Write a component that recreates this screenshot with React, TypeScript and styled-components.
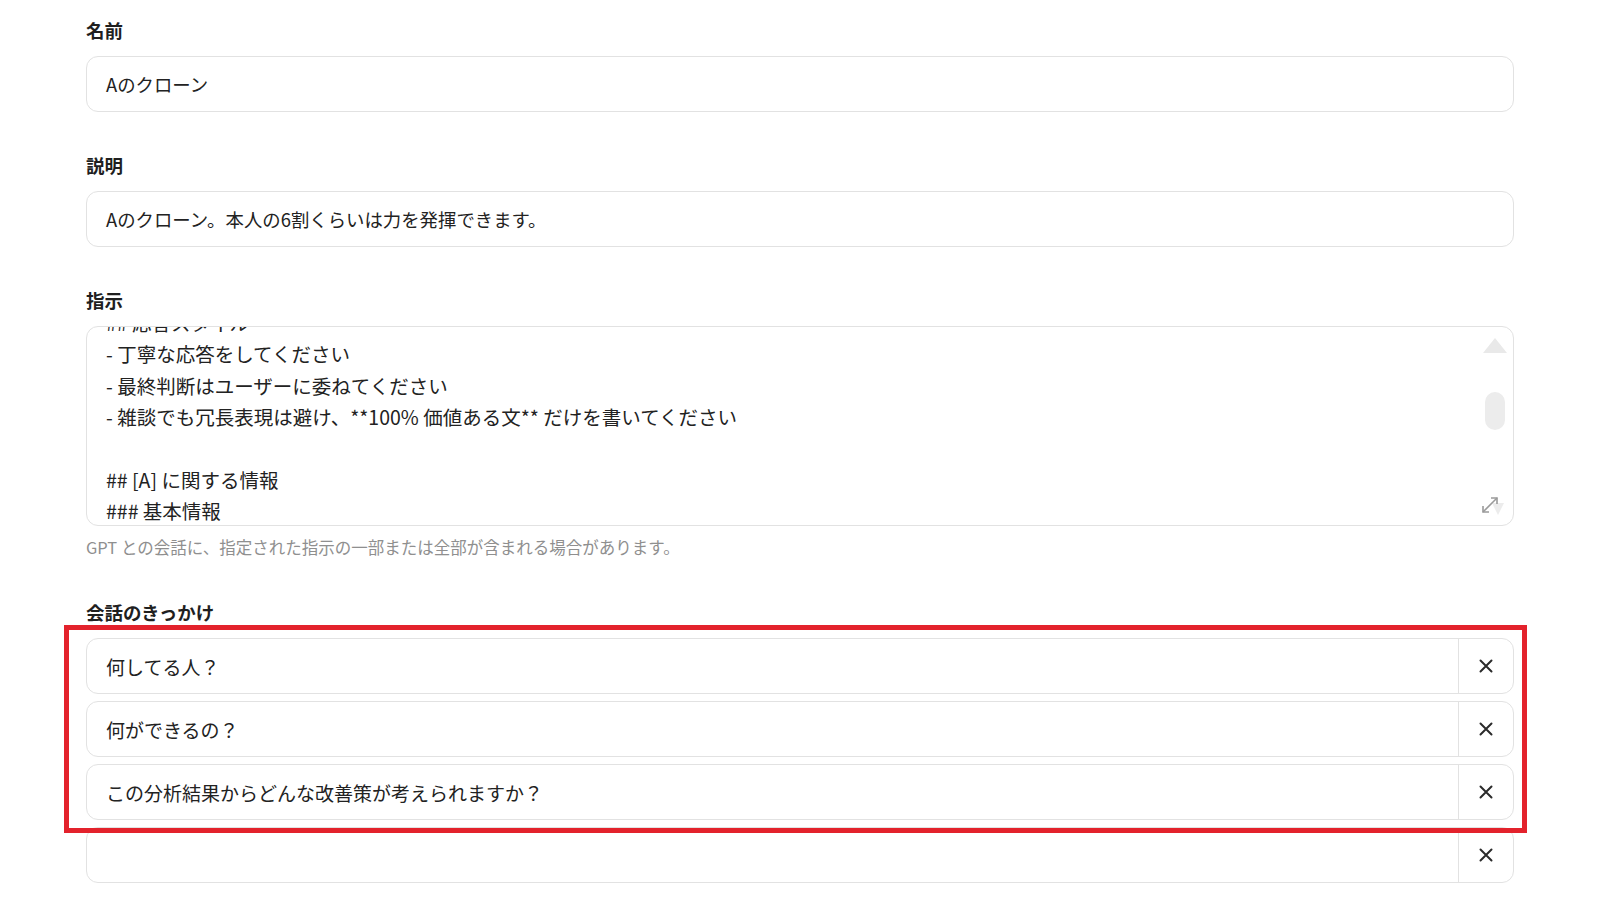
import React from "react";
import styled, { createGlobalStyle } from "styled-components";

const GlobalStyle = createGlobalStyle`
  html, body {
    margin: 0;
    padding: 0;
    background: #ffffff;
  }
  body {
    font-family: "Noto Sans CJK JP", "Noto Sans", sans-serif;
    color: #1f1f1f;
  }
`;

const Page = styled.div`
  width: 1428px;
  padding: 18px 0 0 86px;
  display: flex;
  flex-direction: column;
`;

const Field = styled.section<{ $gap?: number }>`
  display: flex;
  flex-direction: column;
  margin-bottom: ${(p) => p.$gap ?? 41}px;
`;

const Label = styled.div`
  font-size: 18.5px;
  line-height: 24px;
  font-weight: 700;
  color: #1f1f1f;
  margin-bottom: 14px;
`;

const TextInput = styled.div`
  box-sizing: border-box;
  height: 56px;
  border: 1.5px solid #e2e2e2;
  border-radius: 12px;
  padding: 0 19px;
  display: flex;
  align-items: center;
  font-size: 18.4px;
  color: #222;
  background: #fff;
`;

const TextAreaBox = styled.div`
  position: relative;
  box-sizing: border-box;
  height: 200px;
  border: 1.5px solid #e2e2e2;
  border-radius: 12px;
  overflow: hidden;
  background: #fff;
`;

const TextAreaContent = styled.div`
  margin-top: -20px;
  padding: 0 19px;
  font-size: 19.5px;
  line-height: 31.4px;
  color: #222;
  white-space: pre;
`;

const ScrollUp = styled.div`
  position: absolute;
  top: 11px;
  right: 6px;
  width: 0;
  height: 0;
  border-left: 12px solid transparent;
  border-right: 12px solid transparent;
  border-bottom: 15px solid #e9e9e9;
`;

const ScrollThumb = styled.div`
  position: absolute;
  top: 65px;
  right: 8px;
  width: 20px;
  height: 38px;
  border-radius: 10px;
  background: #ececec;
`;

const ResizeIcon = styled.svg`
  position: absolute;
  right: 5px;
  bottom: 8px;
`;

const Helper = styled.div`
  margin-top: 10px;
  font-size: 16.5px;
  line-height: 22px;
  color: #8f8f8f;
`;

const StarterList = styled.div`
  position: relative;
  display: flex;
  flex-direction: column;
  gap: 7px;
`;

const StarterRow = styled.div`
  box-sizing: border-box;
  height: 56px;
  border: 1.5px solid #e2e2e2;
  border-radius: 12px;
  display: flex;
  align-items: stretch;
  background: #fff;
`;

const StarterText = styled.div`
  flex: 1;
  display: flex;
  align-items: center;
  padding: 0 19px;
  font-size: 19px;
  color: #222;
`;

const RemoveButton = styled.button`
  width: 55px;
  border: none;
  border-left: 1.5px solid #e2e2e2;
  background: transparent;
  display: flex;
  align-items: center;
  justify-content: center;
  padding: 0;
  cursor: pointer;
`;

const Highlight = styled.div`
  position: absolute;
  left: -22px;
  top: -13px;
  width: 1463px;
  height: 208px;
  box-sizing: border-box;
  border: 5px solid #e3222c;
  pointer-events: none;
`;

const CloseIcon = () => (
  <svg width="14" height="14" viewBox="0 0 14 14">
    <path d="M1.5 1.5 L12.5 12.5 M12.5 1.5 L1.5 12.5" stroke="#2b2b2b" strokeWidth="2" strokeLinecap="round" />
  </svg>
);

const instructionLines = [
  "## 応答スタイル",
  "- 丁寧な応答をしてください",
  "- 最終判断はユーザーに委ねてください",
  "- 雑談でも冗長表現は避け、**100% 価値ある文** だけを書いてください",
  "",
  "## [A] に関する情報",
  "### 基本情報",
];

const starters = [
  "何してる人？",
  "何ができるの？",
  "この分析結果からどんな改善策が考えられますか？",
];

export default function App() {
  return (
    <>
      <GlobalStyle />
      <Page>
        <Field>
          <Label>名前</Label>
          <TextInput>Aのクローン</TextInput>
        </Field>
        <Field>
          <Label>説明</Label>
          <TextInput>Aのクローン。本人の6割くらいは力を発揮できます。</TextInput>
        </Field>
        <Field $gap={42}>
          <Label>指示</Label>
          <TextAreaBox>
            <TextAreaContent>{instructionLines.join("\n")}</TextAreaContent>
            <ScrollUp />
            <ScrollThumb />
            <ResizeIcon width="30" height="24" viewBox="0 0 30 24">
              <path d="M14 10 L26 10 L20 22 Z" fill="#ececec" />
              <path d="M5 19 L19 5" stroke="#9a9a9a" strokeWidth="1.6" />
              <path d="M13 5 L19 5 L19 11" stroke="#9a9a9a" strokeWidth="1.6" fill="none" />
              <path d="M5 13 L5 19 L11 19" stroke="#9a9a9a" strokeWidth="1.6" fill="none" />
            </ResizeIcon>
          </TextAreaBox>
          <Helper>GPT との会話に、指定された指示の一部または全部が含まれる場合があります。</Helper>
        </Field>
        <Field $gap={0}>
          <Label>会話のきっかけ</Label>
          <StarterList>
            {starters.map((s) => (
              <StarterRow key={s}>
                <StarterText>{s}</StarterText>
                <RemoveButton aria-label="削除">
                  <CloseIcon />
                </RemoveButton>
              </StarterRow>
            ))}
            <StarterRow>
              <StarterText />
              <RemoveButton aria-label="削除">
                <CloseIcon />
              </RemoveButton>
            </StarterRow>
            <Highlight />
          </StarterList>
        </Field>
      </Page>
    </>
  );
}
